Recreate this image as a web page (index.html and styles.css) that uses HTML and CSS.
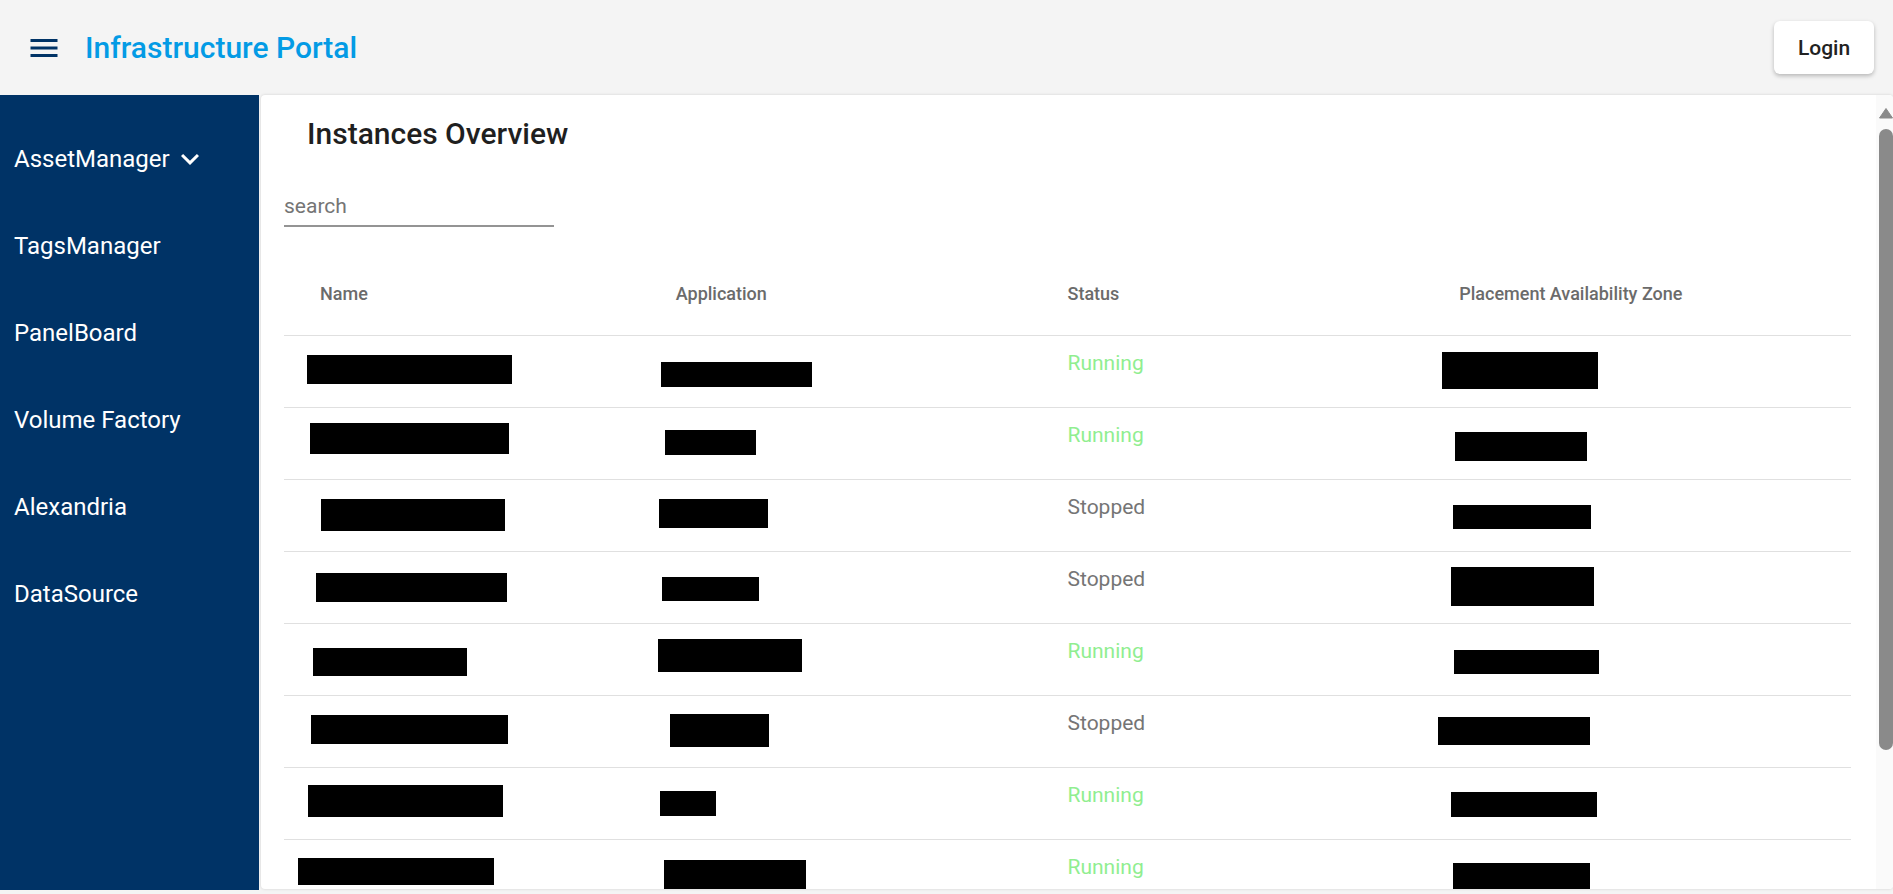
FILE: index.html
```html
<!DOCTYPE html>
<html lang="en">
<head>
<meta charset="utf-8">
<title>Infrastructure Portal</title>
<link rel="stylesheet" href="styles.css">
</head>
<body>
<header class="topbar">
  <button class="menu-btn" aria-label="menu">
    <svg viewBox="0 0 24 24" width="36" height="36"><path d="M3 18h18v-2H3v2zm0-5h18v-2H3v2zm0-7v2h18V6H3z" fill="#003366"/></svg>
  </button>
  <div class="brand">Infrastructure Portal</div>
  <button class="login">Login</button>
</header>
<div class="layout">
  <nav class="sidebar">
    <a class="nav-item">AssetManager<svg class="chev" viewBox="0 0 24 24" width="36" height="36"><path d="M16.59 8.59L12 13.17 7.41 8.59 6 10l6 6 6-6z" fill="#fff"/></svg></a>
    <a class="nav-item">TagsManager</a>
    <a class="nav-item">PanelBoard</a>
    <a class="nav-item">Volume Factory</a>
    <a class="nav-item">Alexandria</a>
    <a class="nav-item">DataSource</a>
  </nav>
  <main class="panel">
    <div class="panel-body">
      <h1 class="title">Instances Overview</h1>
      <input class="search" type="text" placeholder="search">
      <div class="table">
        <div class="row head">
          <div class="cell c1">Name</div>
          <div class="cell">Application</div>
          <div class="cell">Status</div>
          <div class="cell">Placement Availability Zone</div>
        </div>
        <div class="row">
          <div class="cell c1"><span class="redact" style="margin-left:-13px;margin-top:19px;width:205px;height:29px"></span></div>
          <div class="cell"><span class="redact" style="margin-left:-15px;margin-top:26px;width:151px;height:25px"></span></div>
          <div class="cell status running">Running</div>
          <div class="cell"><span class="redact" style="margin-left:-17px;margin-top:16px;width:156px;height:37px"></span></div>
        </div>
        <div class="row">
          <div class="cell c1"><span class="redact" style="margin-left:-10px;margin-top:15px;width:199px;height:31px"></span></div>
          <div class="cell"><span class="redact" style="margin-left:-11px;margin-top:22px;width:91px;height:25px"></span></div>
          <div class="cell status running">Running</div>
          <div class="cell"><span class="redact" style="margin-left:-4px;margin-top:24px;width:132px;height:29px"></span></div>
        </div>
        <div class="row">
          <div class="cell c1"><span class="redact" style="margin-left:1px;margin-top:19px;width:184px;height:32px"></span></div>
          <div class="cell"><span class="redact" style="margin-left:-17px;margin-top:19px;width:109px;height:29px"></span></div>
          <div class="cell status stopped">Stopped</div>
          <div class="cell"><span class="redact" style="margin-left:-6px;margin-top:25px;width:138px;height:24px"></span></div>
        </div>
        <div class="row">
          <div class="cell c1"><span class="redact" style="margin-left:-4px;margin-top:21px;width:191px;height:29px"></span></div>
          <div class="cell"><span class="redact" style="margin-left:-14px;margin-top:25px;width:97px;height:24px"></span></div>
          <div class="cell status stopped">Stopped</div>
          <div class="cell"><span class="redact" style="margin-left:-8px;margin-top:15px;width:143px;height:39px"></span></div>
        </div>
        <div class="row">
          <div class="cell c1"><span class="redact" style="margin-left:-7px;margin-top:24px;width:154px;height:28px"></span></div>
          <div class="cell"><span class="redact" style="margin-left:-18px;margin-top:15px;width:144px;height:33px"></span></div>
          <div class="cell status running">Running</div>
          <div class="cell"><span class="redact" style="margin-left:-5px;margin-top:26px;width:145px;height:24px"></span></div>
        </div>
        <div class="row">
          <div class="cell c1"><span class="redact" style="margin-left:-9px;margin-top:19px;width:197px;height:29px"></span></div>
          <div class="cell"><span class="redact" style="margin-left:-6px;margin-top:18px;width:99px;height:33px"></span></div>
          <div class="cell status stopped">Stopped</div>
          <div class="cell"><span class="redact" style="margin-left:-21px;margin-top:21px;width:152px;height:28px"></span></div>
        </div>
        <div class="row">
          <div class="cell c1"><span class="redact" style="margin-left:-12px;margin-top:17px;width:195px;height:32px"></span></div>
          <div class="cell"><span class="redact" style="margin-left:-16px;margin-top:23px;width:56px;height:25px"></span></div>
          <div class="cell status running">Running</div>
          <div class="cell"><span class="redact" style="margin-left:-8px;margin-top:24px;width:146px;height:25px"></span></div>
        </div>
        <div class="row">
          <div class="cell c1"><span class="redact" style="margin-left:-22px;margin-top:18px;width:196px;height:27px"></span></div>
          <div class="cell"><span class="redact" style="margin-left:-12px;margin-top:20px;width:142px;height:30px"></span></div>
          <div class="cell status running">Running</div>
          <div class="cell"><span class="redact" style="margin-left:-6px;margin-top:23px;width:137px;height:27px"></span></div>
        </div>
      </div>
    </div>
    <div class="vscroll" aria-hidden="true">
      <svg class="vscroll-up" viewBox="0 0 17 34" width="17" height="34"><path d="M3.5 23 L10 13.5 L16.5 23 Z" fill="#8a8a8a" stroke="#8a8a8a" stroke-width="1" stroke-linejoin="round"/></svg>
      <div class="vscroll-thumb"></div>
    </div>
  </main>
</div>
</body>
</html>
```
FILE: styles.css
```css
* { box-sizing: border-box; }
html, body { margin: 0; padding: 0; }
body {
  height: 100vh;
  overflow: hidden;
  background: #f4f4f4;
  font-family: Roboto, "Liberation Sans", Arial, sans-serif;
  color: #222;
}
.topbar {
  height: 95px;
  display: flex;
  align-items: center;
  padding: 0 19px 0 26px;
  background: #f4f4f4;
}
.menu-btn {
  width: 36px;
  height: 36px;
  padding: 0;
  border: 0;
  background: none;
  display: flex;
}
.brand {
  margin-left: 23px;
  font-size: 30px;
  font-weight: 500;
  color: #039be5;
  line-height: 36px;
}
.login {
  margin-left: auto;
  height: 53px;
  width: 100px;
  border: 0;
  border-radius: 6px;
  background: #fff;
  box-shadow: 0 2px 4px rgba(0,0,0,0.25);
  font-family: Roboto, "Liberation Sans", Arial, sans-serif;
  font-size: 21px;
  font-weight: 500;
  color: #222;
}
.layout {
  display: flex;
  height: 795px;
}
.sidebar {
  width: 259px;
  flex: none;
  background: #003366;
  padding-top: 20px;
  display: flex;
  flex-direction: column;
}
.nav-item {
  height: 87px;
  display: flex;
  align-items: center;
  padding-left: 14px;
  color: #fff;
  font-size: 24px;
  font-weight: 400;
}
.chev { margin-left: 2px; }
.panel {
  flex: 1;
  display: flex;
  margin-left: 2px;
  margin-bottom: 1px;
  background: #fff;
  border-radius: 4px;
  box-shadow: 0 0 3px rgba(0,0,0,0.15);
  overflow: hidden;
}
.panel-body {
  flex: 1;
  min-width: 0;
  overflow: hidden;
  padding: 0 25px 14px 23px;
}
.vscroll {
  width: 17px;
  flex: none;
  background: #fafafa;
  display: flex;
  flex-direction: column;
}
.vscroll-up { display: block; flex: none; }
.vscroll-thumb {
  margin-left: 3px;
  width: 14px;
  height: 621px;
  background: #8a8a8a;
  border-radius: 7px;
}
.title {
  margin: 21px 0 0 23px;
  font-size: 30px;
  line-height: 36px;
  font-weight: 500;
  color: #1f1f1f;
}
.search {
  display: block;
  margin-top: 42px;
  width: 270px;
  border: 0;
  border-bottom: 2px solid #949494;
  padding: 0 0 7px;
  font-family: Roboto, "Liberation Sans", Arial, sans-serif;
  font-size: 21px;
  line-height: 24px;
  height: 33px;
  outline: none;
  color: #222;
}
.search::placeholder { color: #757575; opacity: 1; }
.table { margin-top: 37px; }
.row {
  display: grid;
  grid-template-columns: repeat(4, 1fr);
  height: 72px;
  border-bottom: 1px solid #e0e0e0;
}
.cell { min-width: 0; }
.c1 { padding-left: 36px; }
.head .cell {
  padding-top: 19px;
  font-size: 18px;
  line-height: 22px;
  font-weight: 500;
  color: #6b6b6b;
}
.redact {
  display: block;
  background: #000;
}
.status {
  padding-top: 15px;
  font-size: 21px;
  line-height: 25px;
}
.running { color: #90ee90; }
.stopped { color: #757575; }
```
